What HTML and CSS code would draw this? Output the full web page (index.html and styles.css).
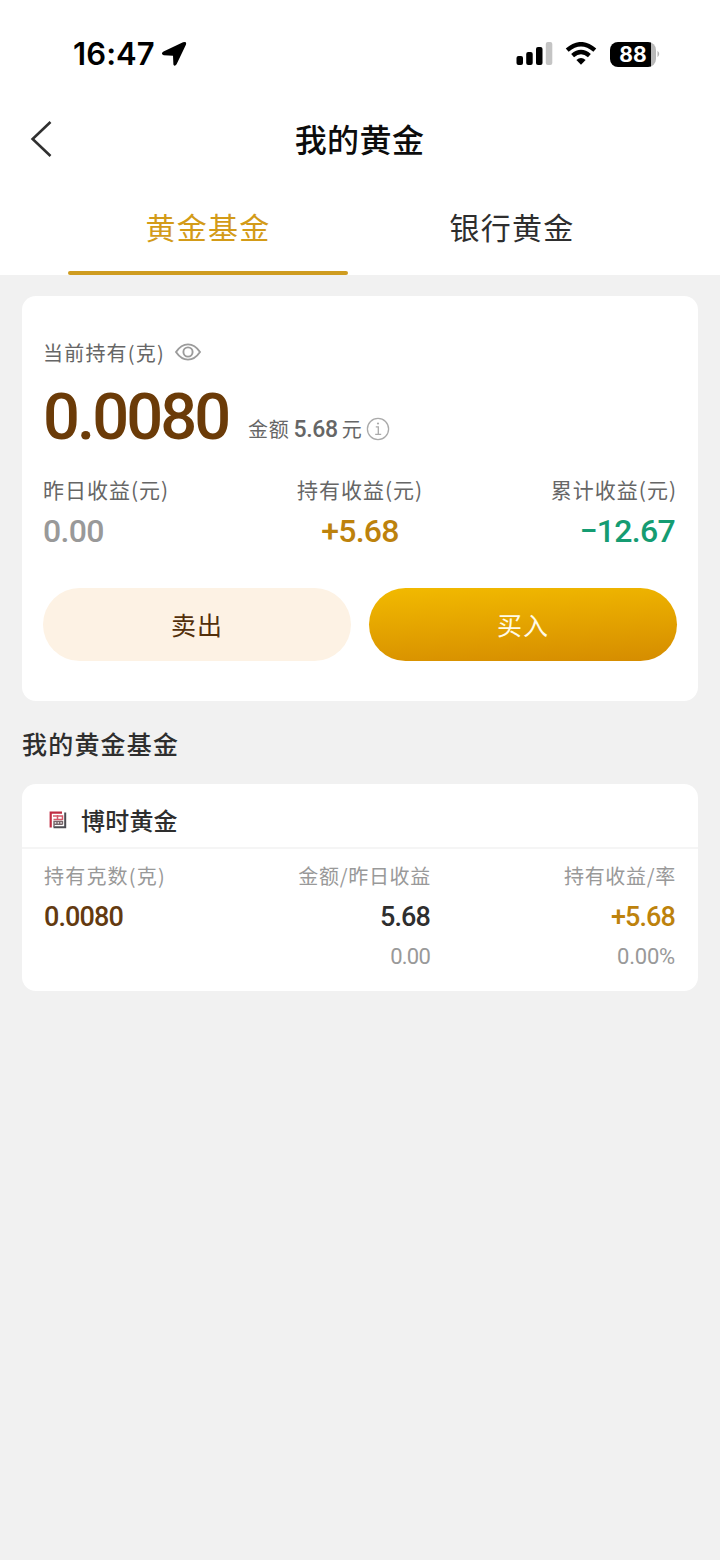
FILE: index.html
```html
<!DOCTYPE html>
<html lang="zh-CN">
<head>
<meta charset="utf-8">
<title>我的黄金</title>
<link rel="stylesheet" href="styles.css">
</head>
<body>
<header class="top">
  <div class="status">
    <span class="time">16:47</span>
    <svg class="loc" width="26" height="26" viewBox="0 0 26 26"><path d="M2.500 10.500 L22 1.200 Q26 0 24.900 3.700 L15.600 23.300 Q13.600 26 12.400 23.400 L12 14.800 L2.800 14.300 Q-.8 12.800 2.500 10.500Z"/></svg>
    <svg class="signal" width="37" height="25" viewBox="0 0 37 25"><rect x=".5" y="14" width="6.5" height="9" rx="2"/><rect x="10.2" y="10" width="6.5" height="13" rx="2"/><rect x="20" y="5" width="6.5" height="18" rx="2"/><rect x="29.8" y="0" width="6.5" height="23" rx="2" fill="#c4c4c4"/></svg>
    <svg class="wifi" width="32" height="25" viewBox="0 0 32 25"><g fill="none" stroke="#000" stroke-width="4.4"><path d="M2.2 8.2 Q16 -3.8 29.8 8.2"/><path d="M7.6 13.6 Q16 6.4 24.4 13.6"/></g><path d="M11.4 18 Q16 14.2 20.6 18 L16 22.8Z"/></svg>
    <div class="battery"><span>88</span></div>
    <svg class="nub" width="4" height="8" viewBox="0 0 4 8"><path d="M.5 .8 Q4 4 .5 7.2Z" fill="#b5b5b5"/></svg>
  </div>
  <div class="nav">
    <svg class="back" width="24" height="38" viewBox="0 0 24 38"><path d="M21.500 2 L3.600 19 L21.500 36" fill="none" stroke="#303030" stroke-width="2.6"/></svg>
    <h1 class="title">我的黄金</h1>
  </div>
  <nav class="tabs">
    <a class="tab active">黄金基金</a>
    <a class="tab">银行黄金</a>
  </nav>
</header>
<main class="main">
  <section class="card summary">
    <div class="hold-label"><span>当前持有(克)</span>
      <svg width="28" height="20" viewBox="0 0 28 20"><g fill="none" stroke="#9b9b9b" stroke-width="1.9"><path d="M2 10 Q7.2 2.4 14 2.4 T26 10 Q20.8 17.6 14 17.6 T2 10Z"/><circle cx="14" cy="10" r="4.6"/></g></svg>
    </div>
    <div class="hold">
      <span class="grams">0.0080</span>
      <span class="amount">金额<b>5.68</b>元</span>
      <svg class="info" width="24" height="24" viewBox="0 0 24 24"><g fill="none" stroke="#aaa" stroke-width="1.3"><circle cx="12" cy="12" r="10.6"/><path d="M9.8 9.800h2.500v7.500M9.200 17.300h6"/></g><circle cx="12" cy="6.500" r="1.1" fill="#aaa"/></svg>
    </div>
    <div class="stats">
      <div class="stat"><span class="label">昨日收益(元)</span><span class="num gray">0.00</span></div>
      <div class="stat center"><span class="label">持有收益(元)</span><span class="num gold">+5.68</span></div>
      <div class="stat right"><span class="label">累计收益(元)</span><span class="num green">−12.67</span></div>
    </div>
    <div class="actions">
      <button class="btn sell">卖出</button>
      <button class="btn buy">买入</button>
    </div>
  </section>
  <h2 class="heading">我的黄金基金</h2>
  <section class="card fund">
    <div class="fund-name">
      <svg class="logo" width="18" height="18" viewBox="0 0 18 18"><g fill="none"><path d="M1.700 16.500V1.700H13" stroke="#c02c42" stroke-width="2.200"/><path d="M4 5H13.500V9M4.500 8.500H13M8.500 4V9" stroke="#d4596a" stroke-width="1.500"/><path d="M16.200 1.500V16.200H4.500" stroke="#4c4c52" stroke-width="2"/><path d="M5 16V10.500H13.500V13.500M8 10V13.500M10.700 10V13.500M5 13.300H13.500" stroke="#77656a" stroke-width="1.400"/></g></svg>
      <span>博时黄金</span>
    </div>
    <div class="cols">
      <div class="col"><span class="col-label wide">持有克数(克)</span><span class="value brown">0.0080</span></div>
      <div class="col end"><span class="col-label">金额/昨日收益</span><span class="value">5.68</span><span class="sub">0.00</span></div>
      <div class="col end"><span class="col-label">持有收益/率</span><span class="value gold">+5.68</span><span class="sub percent">0.00%</span></div>
    </div>
  </section>
</main>
</body>
</html>
```
FILE: styles.css
```css
* { box-sizing: border-box; }
body {
  margin: 0;
  min-height: 1560px;
  background: #f1f1f1;
  color: #2e2e2e;
  font-family: "Noto Sans CJK SC", sans-serif;
  white-space: nowrap;
}
h1, h2 { margin: 0; }
svg { display: block; flex: none; }
.top { height: 275px; background: #fff; }
.status { display: flex; align-items: center; height: 108px; padding-left: 73px; }
.time { width: 88px; font: 600 31px/40px Inter, sans-serif; color: #000; letter-spacing: .1px; }
.signal { margin: 0 0 0 329px; }
.wifi { margin: 0 0 0 12px; }
.battery {
  width: 46px; height: 25px; margin-left: 13px;
  border-radius: 8px;
  background: linear-gradient(90deg, #000 0 41px, #b8b8b8 41px);
  color: #fff; text-align: center;
  font: 700 21px/25px Inter, sans-serif;
}
.nub { margin-left: 1px; }
.nav { display: flex; align-items: center; height: 62px; padding-left: 29px; }
.title { flex: 1; margin-right: 54px; text-align: center; font-size: 32px; line-height: 58px; padding-bottom: 2px; font-weight: 500; color: #0c0c0c; letter-spacing: .4px; }
.tabs { display: flex; height: 105px; padding: 0 68px; gap: 24px; }
.tab { position: relative; width: 280px; height: 105px; padding-top: 36px; text-align: center; font-size: 30px; line-height: 40px; letter-spacing: 1.3px; }
.tab.active { color: #d39b18; }
.tab.active::after { content: ""; position: absolute; left: 0; right: 0; bottom: 0; height: 4px; border-radius: 2px; background: #cf9c20; }
.main { padding: 21px 22px; }
.card { background: #fff; border-radius: 14px; }
.summary { height: 405px; padding: 41px 21px 0; }
.hold-label { display: flex; align-items: center; gap: 9px; height: 30px; font-size: 20px; letter-spacing: 1.2px; color: #666; }
.hold { display: flex; height: 100px; }
.grams { width: 205px; font: 500 65px/100px Roboto, sans-serif; color: #6b3b08; letter-spacing: -2.9px; }
.amount { padding-top: 47px; font-size: 20px; line-height: 30px; color: #666; letter-spacing: .7px; }
.amount b { margin: 0 4px; font: 500 23px/30px Roboto, sans-serif; letter-spacing: -.3px; }
.info { margin: 50px 0 0 3px; }
.stats { display: flex; justify-content: space-between; padding-top: 7px; }
.stat { display: flex; flex-direction: column; }
.center { align-items: center; }
.right { align-items: flex-end; }
.label { font-size: 21px; line-height: 30px; color: #666; letter-spacing: 1px; }
.num { padding-top: 4px; font: 500 32px/46px Roboto, sans-serif; letter-spacing: -.7px; }
.right .num { margin-right: 2px; }
.num.gray { color: #999; }
.gold, .num.gold { color: #bd820c; }
.green { color: #159c72; }
.actions { display: flex; gap: 18px; margin-top: 34px; }
.btn { flex: 1; height: 73px; padding: 0 0 2px; border: 0; border-radius: 37px; font: 400 25px/36px "Noto Sans CJK SC", sans-serif; letter-spacing: .9px; }
.sell { background: #fdf2e4; color: #522f0a; }
.buy { background: linear-gradient(177deg, #f2ba00, #d58c00); color: #fffbe8; }
.heading { height: 83px; padding-top: 24px; font-size: 25px; line-height: 36px; font-weight: 500; letter-spacing: 1.2px; }
.fund { height: 207px; }
.fund-name { display: flex; align-items: center; gap: 14px; height: 65px; padding: 8px 0 0 27px; border-bottom: 2px solid #f5f5f5; font-size: 24px; font-weight: 500; letter-spacing: .2px; }
.cols { display: grid; grid-template-columns: 143px 244px 245px; padding: 12px 0 0 22px; }
.col { display: flex; flex-direction: column; }
.end { align-items: flex-end; }
.col-label { font-size: 20px; line-height: 30px; color: #999; letter-spacing: .7px; }
.wide { letter-spacing: 1.2px; }
.value { font: 500 27px/52px Roboto, sans-serif; letter-spacing: -.9px; }
.end .value { margin-right: 1px; }
.brown { color: #633a10; }
.sub { font: 400 22px/28px Roboto, sans-serif; color: #999; letter-spacing: -.8px; margin-right: 1px; }
.percent { letter-spacing: -.2px; }
```
